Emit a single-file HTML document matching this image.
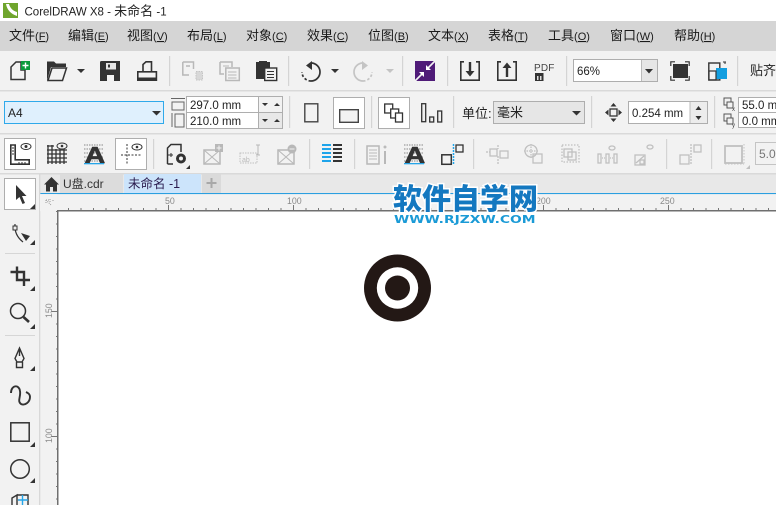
<!DOCTYPE html>
<html><head><meta charset="utf-8">
<style>
html,body{margin:0;padding:0;background:#fff;width:776px;height:505px;overflow:hidden}
svg{display:block}
text{font-family:"Liberation Sans","Noto Sans CJK SC",sans-serif;fill:#222}
.m{font-size:13px;fill:#1a1a1a}
.m tspan{font-size:11px}
.n{font-size:11.5px;fill:#222}
.r{font-size:8.8px;fill:#8a8a8a}
.g{fill:none;stroke:#b8b8b8}
.d{fill:none;stroke:#333}
.k{fill:#333}
.s{fill:#d4d4d4}
.b{fill:#fff;stroke:#aeaeae}
</style></head><body>
<svg width="776" height="505" viewBox="0 0 776 505" xmlns="http://www.w3.org/2000/svg">
<defs>
<pattern id="hx" x="5.5" y="0" width="12.5" height="4" patternUnits="userSpaceOnUse"><rect width="1" height="2" fill="#777"/></pattern>
<pattern id="vy" x="0" y="211" width="4" height="12.5" patternUnits="userSpaceOnUse"><rect width="2" height="1" fill="#777"/></pattern>
</defs>
<rect width="776" height="505" fill="#f2f2f2"/>
<!-- title -->
<rect width="776" height="21" fill="#fff"/>
<rect x="3" y="3" width="15" height="15" fill="#6fa52d"/>
<path d="M6 4 C7 10 11 14 17 16 L17 12 C13 11 10 8 9 4Z" fill="#fff"/>
<text x="24.500" y="15.500" style="font-size:11.500px;fill:#222">CorelDRAW X8 - <tspan style="font-size:13px">未命名</tspan> -1</text>
<!-- menu -->
<rect y="21" width="776" height="30" fill="#d5d5d5"/>
<text class="m" x="9" y="40">文件<tspan>(<tspan text-decoration="underline">F</tspan>)</tspan></text>
<text class="m" x="68" y="40">编辑<tspan>(<tspan text-decoration="underline">E</tspan>)</tspan></text>
<text class="m" x="127" y="40">视图<tspan>(<tspan text-decoration="underline">V</tspan>)</tspan></text>
<text class="m" x="187" y="40">布局<tspan>(<tspan text-decoration="underline">L</tspan>)</tspan></text>
<text class="m" x="246" y="40">对象<tspan>(<tspan text-decoration="underline">C</tspan>)</tspan></text>
<text class="m" x="307" y="40">效果<tspan>(<tspan text-decoration="underline">C</tspan>)</tspan></text>
<text class="m" x="368" y="40">位图<tspan>(<tspan text-decoration="underline">B</tspan>)</tspan></text>
<text class="m" x="428" y="40">文本<tspan>(<tspan text-decoration="underline">X</tspan>)</tspan></text>
<text class="m" x="488" y="40">表格<tspan>(<tspan text-decoration="underline">T</tspan>)</tspan></text>
<text class="m" x="548" y="40">工具<tspan>(<tspan text-decoration="underline">O</tspan>)</tspan></text>
<text class="m" x="610" y="40">窗口<tspan>(<tspan text-decoration="underline">W</tspan>)</tspan></text>
<text class="m" x="674" y="40">帮助<tspan>(<tspan text-decoration="underline">H</tspan>)</tspan></text>
<!-- separators horizontal -->
<rect y="90" width="776" height="1.500" fill="#d9d9d9"/>
<rect y="133" width="776" height="1.500" fill="#d9d9d9"/>
<rect y="173" width="776" height="1.500" fill="#d9d9d9"/>
<!-- toolbar 1 -->
<path class="d" style="stroke-width:1.500" d="M11 79.500V67L16 62H21V70H25V79.500Z"/>
<rect x="21" y="61" width="9" height="9" fill="#0c9a3c"/><path d="M25.500 62.500v6M22.500 65.500h6" stroke="#fff" stroke-width="1.400"/>
<path class="k" d="M47 81V61.500H54L56 63.500H66V67H51L47 81Z"/><path class="d" style="stroke-width:1.500" d="M48 80.500L52 68H66.500L62.500 80.500Z"/>
<path class="k" d="M77 69h8l-4 4z"/>
<path class="k" d="M100 62.500Q100 61 101.500 61H120V81H100Z"/><rect x="106" y="63" width="10" height="6.500" fill="#e6e6e6"/><rect x="107" y="75" width="7" height="6" fill="#f2f2f2"/><rect x="108" y="64.500" width="2" height="3" fill="#333"/>
<path class="d" style="stroke-width:1.600" d="M143 71.500V64.500L146 61.800H151.500V71.500M137.800 71.800H156.400V80.200H137.800Z"/><rect x="138" y="77.500" width="18" height="3" fill="#333"/>
<rect x="169" y="56" width="1.200" height="30" class="s"/>
<path class="g" style="stroke-width:1.500" d="M182.800 62H193.500V69M182.800 62V75H189M186 66h4"/><rect x="196" y="71.500" width="6.500" height="8.500" fill="#d8d8d8" stroke="#c4c4c4" stroke-dasharray="1.500 1"/>
<path class="g" style="stroke-width:1.500" d="M220 62H232V67M220 62V74H224"/><path class="g" style="stroke-width:1" d="M223 66h6"/><rect x="225.800" y="68" width="13.500" height="12.500" class="g" style="stroke-width:1.500"/><path class="g" style="stroke-width:1" d="M228 72h8.500M228 75h8.500M228 78h8.500"/>
<path class="k" d="M256 62h3v-1h8v1h3v17h-14z"/><rect x="264.700" y="68" width="12" height="12.500" fill="#f2f2f2" stroke="#333" stroke-width="1.400"/><path class="d" style="stroke-width:1" d="M267 71.500h7M267 74.500h7M267 77.500h7"/>
<rect x="288" y="56" width="1.200" height="30" class="s"/>
<path d="M311 63A9 9 0 1 1 311 81" fill="none" stroke="#333" stroke-width="1.700"/><path d="M311 81A9 9 0 0 1 302 72" fill="none" stroke="#333" stroke-width="1.700" stroke-dasharray="2.500 2"/><path class="k" d="M312 61V70L306 65.500Z"/>
<path class="k" d="M331 69h8l-4 4z"/>
<path d="M363 63A9 9 0 1 0 363 81" fill="none" stroke="#c4c4c4" stroke-width="1.700"/><path d="M363 81A9 9 0 0 0 372 72" fill="none" stroke="#c4c4c4" stroke-width="1.700" stroke-dasharray="2.500 2"/><path fill="#c4c4c4" d="M362 61V70L368 65.500Z"/>
<path fill="#c4c4c4" d="M386 69h8l-4 4z"/>
<rect x="402" y="56" width="1.200" height="30" class="s"/>
<rect x="415" y="61" width="20" height="20" fill="#4f1b78"/><path d="M435 61L427 69M415 81L423 73" stroke="#f4f4f4" stroke-width="1.600"/><path fill="#fff" d="M426 65V70H431ZM424 72H419L424 77Z"/>
<rect x="447" y="56" width="1.200" height="30" class="s"/>
<path class="d" style="stroke-width:1.600" d="M464 61.800H460.800V80.200H479.200V61.800H476"/><path class="k" d="M468.800 62h2.400v9h3.300L470 76.500 465.500 71h3.300z"/>
<path class="d" style="stroke-width:1.600" d="M501 61.800H497.800V80.200H516.200V61.800H513"/><path class="k" d="M505.800 77h2.400v-9h3.300L507 62.500 502.500 68h3.300z"/>
<text x="534" y="71" style="font-size:10px;fill:#444;letter-spacing:.2px">PDF</text>
<rect x="535" y="73" width="8.500" height="8" fill="#333"/><rect x="537" y="76" width="1.500" height="4" fill="#ddd"/><rect x="540" y="76" width="1.500" height="4" fill="#ddd"/>
<rect x="566" y="56" width="1.200" height="30" class="s"/>
<rect x="573.500" y="59.500" width="84" height="22" class="b"/><rect x="641" y="60" width="16" height="21" fill="#e6e6e6"/><rect x="641" y="60" width="1" height="21" fill="#bbb"/>
<text x="577" y="75" style="font-size:11.500px;fill:#222">66%</text>
<path class="k" d="M645 69h8l-4 4.500z"/>
<rect x="673" y="64" width="15" height="14" fill="#333"/>
<path class="d" style="stroke-width:1.200" d="M670.800 66V61.800H675M685 61.800H689.200V66M689.200 76V80.200H685M675 80.200H670.800V76"/>
<rect x="708.800" y="63" width="11" height="17" class="d" style="stroke-width:1.400"/><rect x="716" y="68" width="11" height="11" fill="#129ee0"/><rect x="709" y="71" width="7" height="9" class="d" style="stroke-width:1.200"/><path class="d" style="stroke-width:1" d="M723 62h3M725 62v2"/>
<rect x="737" y="56" width="1.200" height="30" class="s"/>
<text x="750" y="75" style="font-size:13px;fill:#222">贴齐</text>
<!-- toolbar 2 -->
<rect x="4.500" y="101.500" width="159" height="22" fill="#dff0fd" stroke="#2fa9ea" stroke-width="1"/>
<text x="8" y="117" style="font-size:12px;fill:#222">A4</text>
<path class="k" d="M152 111h9l-4.500 4.500z"/>
<rect x="172" y="102" width="12" height="8" fill="none" stroke="#666" stroke-width="1"/><path d="M171 98.500h14" stroke="#666" stroke-width="1"/>
<rect x="175" y="114" width="9" height="13" fill="none" stroke="#666"/><path d="M172 113v14" stroke="#666"/>
<rect x="186.500" y="96.500" width="96" height="16" class="b"/><rect x="186.500" y="112.500" width="96" height="16" class="b"/>
<rect x="259" y="97" width="23" height="15" fill="#f2f2f2"/><rect x="259" y="113" width="23" height="15" fill="#e8e8e8"/>
<path d="M258.500 96v32" stroke="#aeaeae"/>
<text x="190" y="109" class="n">297.0 mm</text><text x="190" y="125" class="n">210.0 mm</text>
<path class="k" d="M262 103h6l-3 3zM274 106h6l-3-3zM262 119h6l-3 3zM274 122h6l-3-3z"/>
<rect x="289" y="96" width="1.200" height="32" class="s"/>
<rect x="304.800" y="103.800" width="13" height="18" fill="#f2f2f2" stroke="#444" stroke-width="1.400"/>
<rect x="333.500" y="97.500" width="31" height="31" class="b"/><rect x="339.700" y="109.700" width="18.600" height="12.600" fill="#f2f2f2" stroke="#444" stroke-width="1.400"/>
<rect x="371" y="96" width="1.200" height="32" class="s"/>
<rect x="378.500" y="97.500" width="31" height="31" class="b"/>
<rect x="384.700" y="104" width="8" height="9" fill="#fff" stroke="#333" stroke-width="1.300"/><rect x="390.700" y="109" width="8" height="9" fill="#fff" stroke="#333" stroke-width="1.300"/><rect x="395.500" y="113" width="7" height="9" fill="#fff" stroke="#333" stroke-width="1.300"/>
<rect x="421.700" y="103.700" width="4" height="18" fill="#eee" stroke="#333" stroke-width="1.300"/><rect x="429.700" y="117" width="4" height="5" fill="#eee" stroke="#333" stroke-width="1.300"/><rect x="437.700" y="111" width="4" height="11" fill="#eee" stroke="#333" stroke-width="1.300"/>
<rect x="453" y="96" width="1.200" height="32" class="s"/>
<text x="462" y="118" style="font-size:13px;fill:#222">单位:</text>
<rect x="493.500" y="101.500" width="91" height="22" fill="#e6e6e6" stroke="#aeaeae"/>
<text x="497" y="117" style="font-size:13px;fill:#222">毫米</text>
<path class="k" d="M572 111h9l-4.500 4.500z"/>
<rect x="591" y="96" width="1.200" height="32" class="s"/>
<rect x="610" y="109" width="7" height="7" fill="none" stroke="#333" stroke-width="1.300"/><path class="k" d="M613.500 103l3 3.500h-6zM613.500 122l3-3.500h-6zM605 112.500l3.500-3v6zM622 112.500l-3.500-3v6z"/>
<rect x="628.500" y="101.500" width="79" height="22" class="b"/><rect x="690" y="102" width="17" height="21" fill="#ececec"/><path d="M690 102v21" stroke="#bbb"/>
<text x="632" y="117" class="n">0.254 mm</text>
<path class="k" d="M698.500 106l3 4h-6zM698.500 120l3-4h-6z"/>
<rect x="714" y="96" width="1.200" height="32" class="s"/>
<rect x="724" y="98" width="7" height="7" fill="none" stroke="#555"/><rect x="727" y="102" width="6" height="6" fill="#f2f2f2" stroke="#555"/><rect x="724" y="114" width="7" height="7" fill="none" stroke="#555"/><rect x="727" y="118" width="6" height="6" fill="#f2f2f2" stroke="#555"/>
<text x="732" y="111" style="font-size:6px;fill:#444">x</text><text x="732" y="127" style="font-size:6px;fill:#444">y</text>
<rect x="738.500" y="97.500" width="50" height="15" class="b"/><rect x="738.500" y="112.500" width="50" height="15" class="b"/>
<text x="742" y="109" class="n">55.0 mm</text><text x="742" y="125" class="n">0.0 mm</text>
<!-- toolbar 3 -->
<rect x="4.500" y="138.500" width="31" height="31" class="b"/>
<path class="d" style="stroke-width:1.600" d="M10.800 145V164.200H29.200V159.800H15.200V145Z"/><path d="M12 148h2M12 151h2M12 154h2M19 162v2M22 162v2M25 162v2" stroke="#333"/>
<ellipse cx="26" cy="146.500" rx="5" ry="3" class="d" style="stroke-width:1"/><circle cx="26" cy="146.500" r="1.500" fill="#333"/>
<path d="M47 146h7M47 150h20M47 154h20M47 158h20M47 162h20M48 145v19M52 145v19M56 149v15M60 149v15M64 149v15" class="d" style="stroke-width:1.300"/>
<ellipse cx="62" cy="146" rx="5" ry="3" fill="#f2f2f2" stroke="#333"/><circle cx="62" cy="146" r="1.300" fill="#333"/>
<path d="M84 145h20M84 149h20M84 153h20M84 157h20M84 161h20" stroke="#888" stroke-dasharray="1.500 1"/>
<text transform="translate(84.500,163) scale(1.250,1)" style="font-size:23px;font-weight:700;fill:#333;stroke:#333;stroke-width:.6px">A</text><rect x="84" y="163" width="20" height="1.300" fill="#25a5e8"/>
<rect x="115.500" y="138.500" width="31" height="31" class="b"/>
<path d="M127 144v21M121 155h20" stroke="#333" stroke-dasharray="2 1.500"/><ellipse cx="137" cy="147" rx="5" ry="3" class="d" style="stroke-width:1"/><circle cx="137" cy="147" r="1.300" fill="#333"/>
<rect x="153" y="139" width="1.200" height="30" class="s"/>
<path class="d" style="stroke-width:1.500" d="M167.500 164V148L171 144.500H181V152M167.500 164H173"/><path d="M167 155h6M171 153v4" stroke="#333"/>
<circle cx="181" cy="158.500" r="3.500" fill="none" stroke="#333" stroke-width="3"/><path class="k" d="M190 169h-4l4-4z"/>
<rect x="204" y="150" width="16" height="14" class="g" style="stroke-width:1.500"/><path class="g" style="stroke-width:1" d="M204 150l16 14M220 150l-16 14"/><rect x="215" y="144" width="8" height="8" fill="#b8b8b8"/><path d="M219 145.500v5M216.500 148h5" stroke="#f2f2f2"/>
<rect x="240" y="153" width="17" height="10" fill="none" stroke="#c0c0c0" stroke-dasharray="1.500 1"/><text x="242" y="162" style="font-size:7px;fill:#bbb">ab</text><path class="g" style="stroke-width:1" d="M258 145v10M256 145h4M256 155h4"/>
<rect x="278" y="150" width="16" height="14" class="g" style="stroke-width:1.500"/><path class="g" style="stroke-width:1" d="M278 150l16 14M294 150l-16 14"/><circle cx="292" cy="149" r="4.500" fill="#b8b8b8"/><path d="M289.500 149h5" stroke="#f2f2f2"/>
<rect x="309" y="139" width="1.200" height="30" class="s"/>
<path d="M322 145h9M322 149h9M322 153h9M322 157h9M322 161h9" stroke="#1fa4ea" stroke-width="2"/><path d="M333 145h9M333 149h9M333 153h9M333 157h9M333 161h9" stroke="#333" stroke-width="2"/>
<rect x="354" y="139" width="1.200" height="30" class="s"/>
<rect x="367" y="146" width="12" height="18" class="g" style="stroke-width:1.500"/><path d="M369 150h8M369 153h8M369 156h8M369 159h8" stroke="#bbb"/><path class="g" style="stroke-width:2" d="M385 151v13"/><circle cx="385" cy="147" r="1.500" fill="#bbb"/>
<path d="M404 145h20M404 149h20M404 153h20M404 157h20M404 161h20" stroke="#888" stroke-dasharray="1.500 1"/>
<text transform="translate(404.500,163) scale(1.250,1)" style="font-size:23px;font-weight:700;fill:#333;stroke:#333;stroke-width:.6px">A</text><rect x="404" y="163" width="20" height="1.300" fill="#25a5e8"/>
<rect x="441.800" y="154.800" width="9.500" height="9.500" fill="none" stroke="#333" stroke-width="1.500"/><rect x="456" y="145" width="7" height="7" fill="none" stroke="#333" stroke-width="1.300"/><path d="M453.500 144v20" stroke="#22a5ea" stroke-width="1.500" stroke-dasharray="2 1"/>
<rect x="473" y="139" width="1.200" height="30" class="s"/>
<g fill="none" stroke="#c0c0c0" stroke-width="1.300">
<rect x="490" y="149" width="7" height="7"/><rect x="500" y="151" width="8" height="7"/><path d="M486 152h4M498 145v4M498 156v8" stroke-dasharray="2 1"/>
<circle cx="531" cy="151" r="6"/><rect x="533" y="154" width="9" height="9"/><path d="M531 144v14M524 151h14" stroke-dasharray="1.500 1"/>
<rect x="562" y="145" width="17" height="17" stroke-dasharray="1.500 1.500"/><rect x="564" y="149" width="8" height="8"/><rect x="568" y="152" width="8" height="8"/>
<rect x="598" y="154" width="3" height="9"/><rect x="606" y="154" width="3" height="9"/><rect x="614" y="154" width="3" height="9"/><path d="M602 158h3M610 158h3" stroke-dasharray="1 1"/><ellipse cx="612" cy="148" rx="3" ry="2"/>
<rect x="635" y="155" width="10" height="10"/><rect x="640" y="160" width="4" height="4"/><ellipse cx="650" cy="147" rx="3" ry="2"/><path d="M636 163l8-7"/>
</g>
<rect x="666" y="139" width="1.200" height="30" class="s"/>
<g fill="none" stroke="#c0c0c0" stroke-width="1.300"><rect x="680" y="155" width="9" height="9"/><rect x="694" y="145" width="7" height="7"/><path d="M691 144v20" stroke-dasharray="2 1"/></g>
<rect x="711" y="139" width="1.200" height="30" class="s"/>
<rect x="725" y="146" width="17" height="17" fill="none" stroke="#c0c0c0" stroke-width="1.800"/><path d="M744 144v20M725 164h19" stroke="#c4c4c4" stroke-dasharray="1.500 1.500"/><path fill="#c0c0c0" d="M750 169h-4l4-4z"/>
<rect x="755.500" y="142.500" width="30" height="22" fill="#f2f2f2" stroke="#c4c4c4"/>
<text x="759" y="158" style="font-size:12px;fill:#777">5.0</text>
<!-- tab strip -->
<rect x="40" y="174.500" width="736" height="18.500" fill="#e8e8e8"/>
<rect x="60" y="174" width="63" height="19" fill="#dcdcdc"/>
<rect x="124" y="174" width="77" height="19" fill="#cce4fb"/>
<rect x="202" y="174" width="19" height="19" fill="#dadada"/>
<path class="k" d="M51.500 177L44 184.500H46V191.500H50V187H53V191.500H57V184.500H59Z"/>
<text x="63" y="188" style="font-size:12px;fill:#333">U盘.cdr</text>
<text x="128" y="188" style="font-size:12.500px;fill:#2a1b4e">未命名 -1</text>
<path d="M211.500 178v10M206.500 183h10" stroke="#a8a8a8" stroke-width="2"/>
<rect x="40" y="193" width="736" height="1.200" fill="#2b9fe0"/>
<!-- left toolbox -->
<rect x="39" y="174" width="1.400" height="331" fill="#d8d8d8"/>
<rect x="4.500" y="178.500" width="31" height="31" class="b"/>
<path class="k" d="M16 185L26.500 196H22L25 203L22.500 204L19.500 197L16 200Z"/><path class="k" d="M35 209h-5l5-5z"/>
<path d="M15 224Q14 235 23 242" fill="none" stroke="#333" stroke-width="1.200"/><rect x="13" y="226" width="4" height="4" fill="#eee" stroke="#333"/><path class="k" d="M21 233L30 236L26 241Z"/><path class="k" d="M35 245h-5l5-5z"/>
<rect x="5" y="253" width="30" height="1" fill="#d6d6d6"/>
<path d="M10.500 272H24V286M17 266.500V280H30" fill="none" stroke="#333" stroke-width="2.400"/><path class="k" d="M35 291h-5l5-5z"/>
<circle cx="18" cy="311" r="7.500" fill="none" stroke="#333" stroke-width="1.500"/><path d="M23.500 317L29 322" stroke="#333" stroke-width="2.600"/><path class="k" d="M35 329h-5l5-5z"/>
<rect x="5" y="335" width="30" height="1" fill="#d6d6d6"/>
<path class="d" style="stroke-width:1.400" d="M19.500 348L15 358.500L17 362H22L24 358.500ZM19.500 348V356M16.500 362V367.500H22.500V362"/><path class="k" d="M35 371h-5l5-5z"/>
<path d="M11 393C11 385 19 384 20 391C21 397 17 401 21 404C25 406 30 402 30 397C30 394 28 393 26 392" fill="none" stroke="#333" stroke-width="1.900"/>
<rect x="10.800" y="422.800" width="18.400" height="18.400" fill="none" stroke="#333" stroke-width="1.500"/><path class="k" d="M35 447h-5l5-5z"/>
<circle cx="20" cy="469" r="9.300" fill="none" stroke="#333" stroke-width="1.500"/><path class="k" d="M35 483h-5l5-5z"/>
<path d="M12 505V498L17 495V505M17 495H28V505" fill="none" stroke="#333" stroke-width="1.400"/><path d="M18 500H28M22.500 495V505" stroke="#25a5e8" stroke-width="1.400"/>
<!-- rulers -->
<rect x="40" y="194.200" width="736" height="17" fill="#f2f2f2"/>
<rect x="40.400" y="194.200" width="17" height="311" fill="#f2f2f2"/>
<rect x="57" y="208" width="719" height="2" fill="url(#hx)"/>
<rect x="55" y="211" width="2" height="294" fill="url(#vy)"/>
<path d="M168.500 205v4M293.500 205v4M418.500 205v4M543.500 205v4M668.500 205v4" stroke="#777"/>
<path d="M51 311.500h5M51 436.500h5" stroke="#777"/>
<rect x="57" y="210" width="719" height="1.500" fill="#6f6f6f"/>
<rect x="57" y="210" width="1.500" height="295" fill="#6f6f6f"/>
<rect x="58.500" y="211.500" width="717.500" height="293.500" fill="#fff"/>
<path d="M46 200l5 5M46 200h4M46 200v4M50 199v3M53 200v1" stroke="#999" stroke-dasharray="1 1"/>
<text class="r" x="165" y="204">50</text><text class="r" x="287" y="204">100</text><text class="r" x="536" y="204">200</text><text class="r" x="660" y="204">250</text>
<text class="r" transform="translate(52,318) rotate(-90)">150</text>
<text class="r" transform="translate(52,443) rotate(-90)">100</text>
<!-- artwork -->
<circle cx="397.500" cy="288" r="33.500" fill="#231815"/><circle cx="397.500" cy="288" r="20.700" fill="#fff"/><circle cx="397.500" cy="288" r="12.500" fill="#231815"/>
<!-- watermark -->
<text x="393" y="209" style="font-size:29px;font-weight:900;fill:#1478c0;stroke:#fff;stroke-width:3px;paint-order:stroke">软件自学网</text>
<text transform="translate(394,223) scale(1.320,1)" style="font-family:'DejaVu Sans',sans-serif;font-size:10.500px;font-weight:700;fill:#1a9ad6;stroke:#fff;stroke-width:1.500px;paint-order:stroke">WWW.RJZXW.COM</text>
</svg>
</body></html>
